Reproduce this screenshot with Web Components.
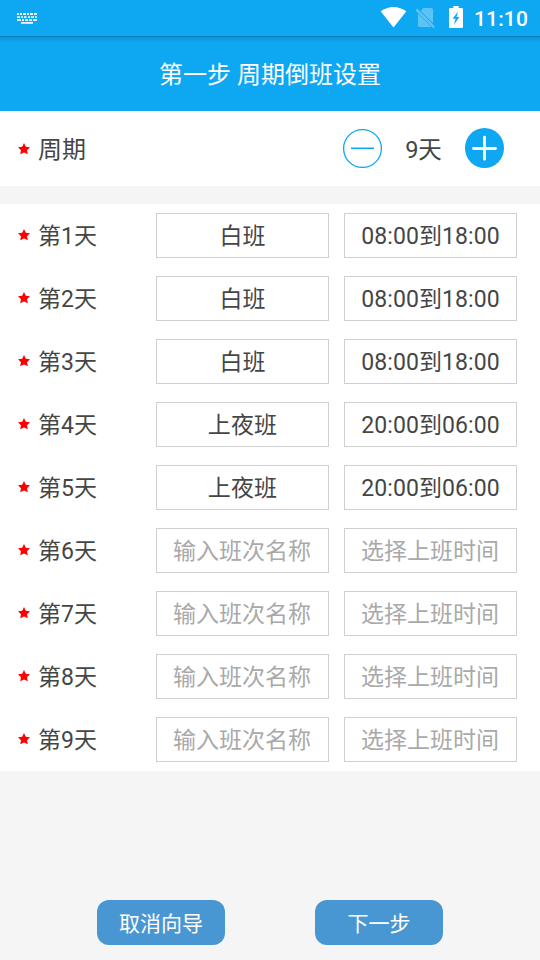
<!DOCTYPE html>
<html lang="zh-CN">
<head>
<meta charset="UTF-8">
<meta name="viewport" content="width=device-width, initial-scale=1">
<title>周期倒班设置</title>
<style>
body {
  margin: 0;
  background: #f5f5f5;
  font-family: Roboto, "Noto Sans CJK SC", sans-serif;
  --color-primary: #0ea7f2;
  --color-text: #444646;
  --color-hint: #a9a9a9;
  --color-line: #d0d0d0;
}
</style>
</head>
<body>
<shift-setup></shift-setup>

<script>
class StatusBar extends HTMLElement {
  constructor() {
    super();
    this.attachShadow({ mode: 'open' });
  }

  connectedCallback() {
    const time = this.getAttribute('time') || '';
    this.shadowRoot.innerHTML = `
    <style>
:host {
  display: flex;
  align-items: center;
  justify-content: space-between;
  box-sizing: border-box;
  height: 36px;
  padding: 0 12px 0 15px;
  background: var(--color-primary);
  color: #fff;
}
svg { display: block; fill: currentColor; }
.status { display: flex; align-items: center; }
.time {
  width: 54px;
  margin-left: 10px;
  font-size: 21px;
  line-height: 36px;
  font-weight: 500;
  letter-spacing: 0.15px;
  white-space: nowrap;
  padding-top: 2px;
}
    </style>
    <svg width="24" height="36" viewBox="0 0 24 36" opacity="0.92">
      <path d="M2 13h2v2H2zM5 13h2v2H5zM8 13h3v2H8zM12 13h2v2h-2zM15 13h3v2h-3zM19 13h3v2h-3z"/>
      <path d="M2 16.2h3v1.8H2zM6 16.2h2v1.8H6zM9 16.2h2.5v1.8H9zM13 16.2h2v1.8h-2zM16 16.2h3v1.8h-3zM20 16.2h2v1.8h-2z"/>
      <path d="M2 19.2h4v1.8H2zM7 19.2h2v1.8H7zM10 19.2h3v1.8h-3zM14 19.2h3v1.8h-3zM18 19.2h4v1.8h-4z"/>
      <path d="M6 22h12v1.8H6z"/>
    </svg>
    <div class="status">
      <svg width="84" height="36" viewBox="380 0 84 36">
        <path d="M393.5 27.6 380.7 11.3C384.4 8.6 388.8 7 393.5 7s9.1 1.6 12.8 4.3z"/>
        <g opacity="0.32">
          <path d="M423.3 8H431.4Q433 8 433 9.6V23.2L420.8 11zM418 13.6 431.4 27H419.6Q418 27 418 25.4z"/>
          <path d="M417.2 8.6 435 26.6 433.4 28.2 415.4 10.2z"/>
        </g>
        <path fill-rule="evenodd" d="M453.3 6h5.4v2h3.1q1.2 0 1.2 1.2V26.8q0 1.2-1.2 1.2H450.2q-1.2 0-1.2-1.2V9.2Q449 8 450.2 8h3.1zM458 11.5 452.6 18.8h3L453.8 25 459.4 16.9h-2.9z"/>
      </svg>
      <span class="time">${time}</span>
    </div>
    `;
  }
}
customElements.define('status-bar', StatusBar);

class PageHeader extends HTMLElement {
  constructor() {
    super();
    this.attachShadow({ mode: 'open' });
    this.shadowRoot.innerHTML = `
    <style>
:host {
  display: flex;
  align-items: center;
  justify-content: center;
  box-sizing: border-box;
  height: 75px;
  padding-top: 2px;
  background:
    linear-gradient(#087fb9 1px, rgba(0, 60, 100, 0.18) 1px, rgba(0, 60, 100, 0) 7px),
    var(--color-primary);
  color: #fff;
  font-size: 24px;
  line-height: 36px;
}
    </style>
    <slot></slot>
    `;
  }
}
customElements.define('page-header', PageHeader);

//Red star followed by the label of a required field
class RequiredLabel extends HTMLElement {
  constructor() {
    super();
    this.attachShadow({ mode: 'open' });
    this.shadowRoot.innerHTML = `
    <style>
:host {
  display: flex;
  align-items: center;
  gap: 8px;
  color: var(--color-text);
}
svg {
  display: block;
  margin-bottom: var(--star-lift, 0);
  fill: #f00;
}
span { padding-top: 2px; }
    </style>
    <svg width="12" height="12" viewBox="0 0 12 12"><path d="M6 0 7.8 3.8 12 4.3 9 7.2 9.8 11.2 6 9.4 2.2 11.2 3 7.2 0 4.3 4.2 3.8z"/></svg>
    <span><slot></slot></span>
    `;
  }
}
customElements.define('required-label', RequiredLabel);

class DayStepper extends HTMLElement {
  constructor() {
    super();
    this.attachShadow({ mode: 'open' });
  }

  static get observedAttributes() {
    return ['value'];
  }

  connectedCallback() {
    this.render();
  }

  attributeChangedCallback() {
    this.render();
  }

  render() {
    this.shadowRoot.innerHTML = `
    <style>
:host {
  display: flex;
  align-items: center;
  color: var(--color-text);
}
button {
  display: block;
  padding: 0 0 1px;
  border: 0;
  background: none;
  color: var(--color-primary);
}
svg { display: block; }
.value {
  box-sizing: border-box;
  width: 82px;
  padding: 2px 1px 0 0;
  font-size: 23.5px;
  text-align: center;
}
    </style>
    <button aria-label="-">
      <svg width="40" height="40" viewBox="0 0 40 40" fill="none" stroke="currentColor">
        <circle cx="19.5" cy="20.5" r="18.9" stroke-width="1.3"/>
        <path d="M8 20.3h23" stroke-width="1.6"/>
      </svg>
    </button>
    <span class="value">${this.getAttribute('value')}天</span>
    <button aria-label="+">
      <svg width="40" height="40" viewBox="0 0 40 40">
        <ellipse cx="19.5" cy="20" rx="19.5" ry="20" fill="currentColor"/>
        <path d="M8.5 20.5h22M19.5 9.2v22" stroke="#fff" stroke-width="2.8" stroke-linecap="round"/>
      </svg>
    </button>
    `;
  }
}
customElements.define('day-stepper', DayStepper);

class ShiftField extends HTMLElement {
  constructor() {
    super();
    this.attachShadow({ mode: 'open' });
  }

  connectedCallback() {
    const value = this.getAttribute('value');
    const hint = this.getAttribute('hint');
    this.shadowRoot.innerHTML = `
    <style>
:host {
  display: flex;
  align-items: center;
  justify-content: center;
  box-sizing: border-box;
  height: 45px;
  padding: 2px 1px 0 0;
  border: 1px solid var(--color-line);
  background: #fff;
  color: var(--color-text);
  white-space: nowrap;
}
.value {
  margin-left: 1px;
  letter-spacing: 0.1px;
}
.hint { color: var(--color-hint); }
    </style>
    <span class="${value ? 'value' : 'hint'}">${value || hint}</span>
    `;
  }
}
customElements.define('shift-field', ShiftField);

class DayRow extends HTMLElement {
  constructor() {
    super();
    this.attachShadow({ mode: 'open' });
  }

  connectedCallback() {
    const day = this.getAttribute('day');
    const shift = this.getAttribute('shift') || '';
    const hours = this.getAttribute('hours') || '';
    this.shadowRoot.innerHTML = `
    <style>
:host {
  display: grid;
  grid-template-columns: 123px 173px 173px;
  column-gap: 15px;
  align-items: center;
  height: 63px;
  padding-left: 18px;
  font-size: 23px;
  line-height: 34px;
  --star-lift: 2px;
}
    </style>
    <required-label>第${day}天</required-label>
    <shift-field value="${shift}" hint="输入班次名称"></shift-field>
    <shift-field value="${hours}" hint="选择上班时间"></shift-field>
    `;
  }
}
customElements.define('day-row', DayRow);

class WizardButton extends HTMLElement {
  constructor() {
    super();
    this.attachShadow({ mode: 'open' });
    this.shadowRoot.innerHTML = `
    <style>
:host { display: block; }
button {
  display: block;
  width: 128px;
  height: 45px;
  padding: 0 0 2px;
  border: 0;
  border-radius: 12px;
  background: #4997d2;
  color: #fff;
  font: inherit;
  font-size: 21px;
}
    </style>
    <button><slot></slot></button>
    `;
  }
}
customElements.define('wizard-button', WizardButton);

class ShiftSetup extends HTMLElement {
  constructor() {
    super();
    this.attachShadow({ mode: 'open' });
    this.days = [
      { shift: '白班', hours: '08:00到18:00' },
      { shift: '白班', hours: '08:00到18:00' },
      { shift: '白班', hours: '08:00到18:00' },
      { shift: '上夜班', hours: '20:00到06:00' },
      { shift: '上夜班', hours: '20:00到06:00' },
      {}, {}, {}, {},
    ];
  }

  connectedCallback() {
    const rows = this.days.map((item, i) => `
      <day-row day="${i + 1}" shift="${item.shift || ''}" hours="${item.hours || ''}"></day-row>`).join('');

    this.shadowRoot.innerHTML = `
    <style>
:host {
  display: flex;
  flex-direction: column;
  height: 960px;
  overflow: hidden;
}
.period {
  display: flex;
  align-items: center;
  justify-content: space-between;
  box-sizing: border-box;
  height: 75px;
  padding: 0 35px 0 18px;
  background: #fff;
  font-size: 24px;
  line-height: 36px;
}
.days {
  margin-top: 18px;
  background: #fff;
}
.actions {
  display: flex;
  justify-content: center;
  gap: 90px;
  margin-top: auto;
  padding-bottom: 15px;
}
    </style>
    <status-bar time="11:10"></status-bar>
    <page-header>第一步 周期倒班设置</page-header>
    <section class="period">
      <required-label>周期</required-label>
      <day-stepper value="${this.days.length}"></day-stepper>
    </section>
    <section class="days">${rows}</section>
    <footer class="actions">
      <wizard-button>取消向导</wizard-button>
      <wizard-button>下一步</wizard-button>
    </footer>
    `;
  }
}
customElements.define('shift-setup', ShiftSetup);
</script>
</body>
</html>
